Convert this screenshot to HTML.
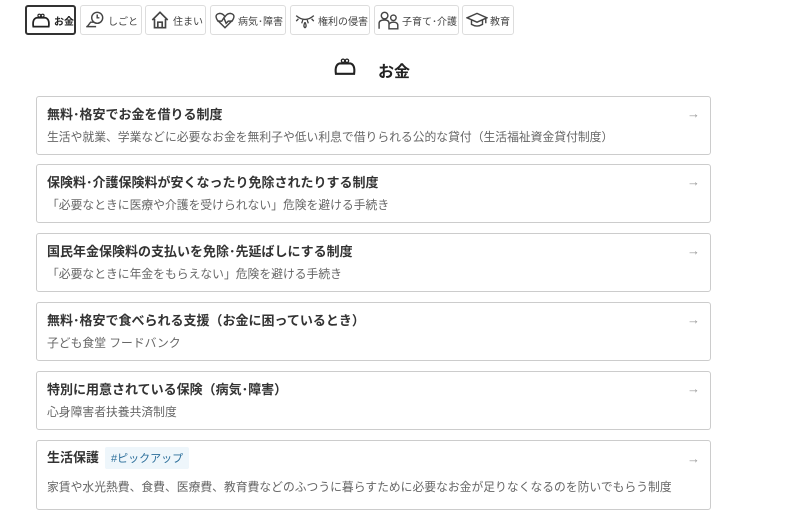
<!DOCTYPE html><html><head><meta charset="utf-8"><style>
body{margin:0;width:800px;height:500px;overflow:hidden;background:#fff;font-family:"Liberation Sans","Noto Sans CJK JP",sans-serif;color:#333;position:relative}
.tab{position:absolute;top:5px;height:30px;border:1.5px solid #ddd;border-radius:3px;box-sizing:border-box;font-size:10px;display:flex;align-items:center;padding-left:3px;gap:2px;color:#444}
.tab svg{width:22px;height:20px}
.sel{border:2px solid #333;font-weight:bold;color:#222}
.card{position:absolute;left:36px;width:675px;height:59px;border:1px solid #ccc;border-radius:3px;box-sizing:border-box}
.t{position:absolute;left:10px;top:7px;font-size:13px;font-weight:bold;color:#333}
.d{position:absolute;left:10px;top:31px;font-size:11.8px;color:#666}
.a{position:absolute;right:10px;top:9px;font-size:13px;color:#999}
.tag{display:inline-block;background:#eef6fb;color:#2b6e9a;font-size:11px;font-weight:normal;padding:3px 6px;margin-left:6px;border-radius:2px}
</style></head><body>
<div class="tab sel" style="left:25px;width:51px"><svg viewBox="0 0 20 18"><path d="M3 15 Q2 8 6 7 H14 Q18 8 17 15 Z" fill="none" stroke="#222" stroke-width="1.6"/><circle cx="8.5" cy="5" r="1.3" fill="none" stroke="#222"/><circle cx="11.5" cy="5" r="1.3" fill="none" stroke="#222"/></svg>お金</div>
<div class="tab" style="left:80px;width:62px"><svg viewBox="0 0 20 18"><circle cx="12" cy="7" r="5" fill="none" stroke="#444" stroke-width="1.3"/><path d="M12 4v3h2M2 15h9M3 15l3-4h3" fill="none" stroke="#444" stroke-width="1.3"/></svg>しごと</div>
<div class="tab" style="left:145px;width:61px"><svg viewBox="0 0 20 18"><path d="M3 9 L10 2 L17 9 M5 8 V16 H15 V8 M8 16 V11 H12 V16" fill="none" stroke="#444" stroke-width="1.5"/></svg>住まい</div>
<div class="tab" style="left:210px;width:76px"><svg viewBox="0 0 20 18"><path d="M10 16 L3 9 Q0 4 5 3 Q8 3 10 6 Q12 3 15 3 Q20 4 17 9 Z M3 10 H7 L9 7 L11 12 L13 10 H17" fill="none" stroke="#444" stroke-width="1.3"/></svg>病気･障害</div>
<div class="tab" style="left:290px;width:80px"><svg viewBox="0 0 20 18"><path d="M2 5 Q10 12 18 5 M4 8 L2 10 M8 9 L7 12 M12 9 L13 12 M16 8 L18 10 M10 11 Q8 15 10 16 Q12 15 10 11" fill="none" stroke="#444" stroke-width="1.2"/></svg>権利の侵害</div>
<div class="tab" style="left:374px;width:85px"><svg viewBox="0 0 20 18"><circle cx="6" cy="5" r="3" fill="none" stroke="#444" stroke-width="1.3"/><circle cx="14" cy="7" r="2.5" fill="none" stroke="#444" stroke-width="1.3"/><path d="M1 17 V12 Q1 9 6 9 Q10 9 10 12 V17 M10 17 V13 Q11 11 14 11 Q18 11 18 14 V17 Z" fill="none" stroke="#444" stroke-width="1.3"/></svg>子育て･介護</div>
<div class="tab" style="left:462px;width:52px"><svg viewBox="0 0 20 18"><path d="M1 7 L10 3 L19 7 L10 11 Z M5 9 V13 Q10 16 15 13 V9 M18 7 V12" fill="none" stroke="#444" stroke-width="1.3"/></svg>教育</div>
<svg style="position:absolute;left:332px;top:54px" width="26" height="24" viewBox="0 0 20 18"><path d="M3 15 Q2 8 6 7 H14 Q18 8 17 15 Z" fill="none" stroke="#222" stroke-width="1.6"/><circle cx="8.5" cy="5" r="1.3" fill="none" stroke="#222"/><circle cx="11.5" cy="5" r="1.3" fill="none" stroke="#222"/></svg>
<div style="position:absolute;left:378px;top:58px;font-size:16px;color:#222;font-weight:bold">お金</div>
<div class="card" style="top:96px"><div class="t">無料･格安でお金を借りる制度</div><div class="a">→</div><div class="d">生活や就業、学業などに必要なお金を無利子や低い利息で借りられる公的な貸付（生活福祉資金貸付制度）</div></div>
<div class="card" style="top:164px"><div class="t">保険料･介護保険料が安くなったり免除されたりする制度</div><div class="a">→</div><div class="d">「必要なときに医療や介護を受けられない」危険を避ける手続き</div></div>
<div class="card" style="top:233px"><div class="t">国民年金保険料の支払いを免除･先延ばしにする制度</div><div class="a">→</div><div class="d">「必要なときに年金をもらえない」危険を避ける手続き</div></div>
<div class="card" style="top:302px"><div class="t">無料･格安で食べられる支援（お金に困っているとき）</div><div class="a">→</div><div class="d">子ども食堂 フードバンク</div></div>
<div class="card" style="top:371px"><div class="t">特別に用意されている保険（病気･障害）</div><div class="a">→</div><div class="d">心身障害者扶養共済制度</div></div>
<div class="card" style="top:440px;height:70px"><div class="t" style="top:6px">生活保護<span class="tag">#ピックアップ</span></div><div class="a" style="top:10px">→</div><div class="d" style="top:37px">家賃や水光熱費、食費、医療費、教育費などのふつうに暮らすために必要なお金が足りなくなるのを防いでもらう制度</div></div>
</body></html>
